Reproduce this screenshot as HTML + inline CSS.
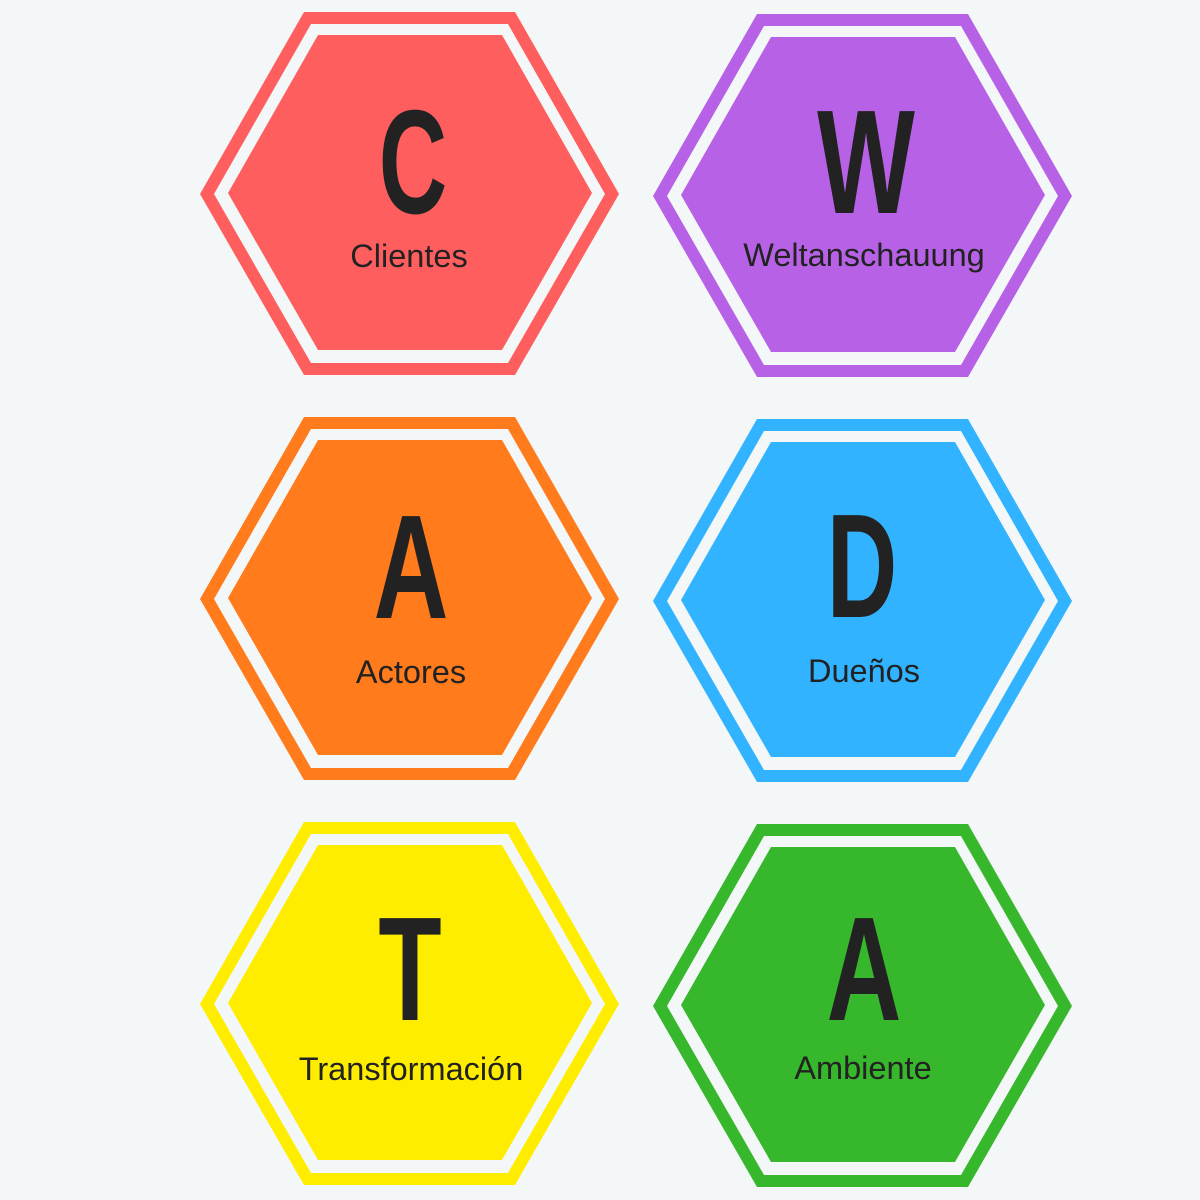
<!DOCTYPE html>
<html><head><meta charset="utf-8"><style>
html,body{margin:0;padding:0;background:#F3F7F7;}
svg{display:block}
.L{font-family:"Liberation Sans Narrow","Liberation Sans",sans-serif;font-weight:bold;font-size:148px;fill:#222;}
.t{font-family:"Liberation Sans",sans-serif;font-size:32.5px;fill:#222;}
</style></head><body>
<svg width="1200" height="1200" viewBox="0 0 1200 1200">
<defs>
<g id="h">
<polygon points="0,182 104,0 315,0 419,182 315,363 104,363"/>
<polygon fill="#F3F7F7" points="14,182 111,12 308,12 405,182 308,351 111,351"/>
<polygon points="28,181 118,23 302,23 392,181 302,338 118,338"/>
</g>
</defs>
<use href="#h" x="200" y="12" fill="#FF5E5E"/>
<use href="#h" x="653" y="14" fill="#B762E6"/>
<use href="#h" x="200" y="417" fill="#FF7B1C"/>
<use href="#h" x="653" y="419" fill="#31B3FF"/>
<use href="#h" x="200" y="822" fill="#FFED00"/>
<use href="#h" x="653" y="824" fill="#37B72B"/>

<text class="L" text-anchor="middle" transform="translate(413,213) scale(0.64,1)">C</text>
<text class="L" text-anchor="middle" transform="translate(866,213) scale(0.7,1)">W</text>
<text class="L" text-anchor="middle" transform="translate(411,618) scale(0.7,1)">A</text>
<text class="L" text-anchor="middle" transform="translate(862,617) scale(0.66,1)">D</text>
<text class="L" text-anchor="middle" transform="translate(410,1020) scale(0.7,1)">T</text>
<text class="L" text-anchor="middle" transform="translate(864,1020) scale(0.7,1)">A</text>

<text class="t" text-anchor="middle" x="409" y="267">Clientes</text>
<text class="t" text-anchor="middle" x="864" y="266">Weltanschauung</text>
<text class="t" text-anchor="middle" x="411" y="683">Actores</text>
<text class="t" text-anchor="middle" x="864" y="682">Dueños</text>
<text class="t" text-anchor="middle" x="411" y="1080">Transformación</text>
<text class="t" text-anchor="middle" x="863" y="1079">Ambiente</text>
</svg>
</body></html>
